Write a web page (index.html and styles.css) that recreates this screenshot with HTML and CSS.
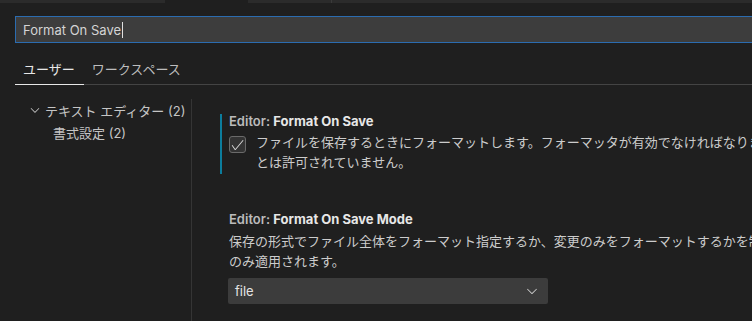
FILE: index.html
```html
<!DOCTYPE html>
<html lang="ja">
<head>
    <meta charset="UTF-8">
    <title>設定</title>
    <link rel="stylesheet" href="styles.css">
</head>
<body>

    <div class="tab-strip">
        <div class="strip-piece strip-a"></div>
        <div class="strip-gap"></div>
        <div class="strip-piece strip-b"></div>
        <div class="strip-piece strip-c"></div>
    </div>

    <div class="search-bar">
        <div class="search-box">Format On Save<span class="caret"></span></div>
    </div>

    <div class="scope-tabs">
        <div class="scope-tab active">ユーザー</div>
        <div class="scope-tab">ワークスペース</div>
    </div>

    <div class="settings-body">
        <div class="toc">
            <div class="toc-row">
                <svg class="toc-chevron" viewBox="0 0 16 16" width="14" height="14">
                    <path d="M7.976 10.072l4.357-4.357.62.618L8.284 11h-.618L3 6.333l.619-.618 4.357 4.357z" fill="#c5c5c5"/>
                </svg>
                <span>テキスト エディター (2)</span>
            </div>
            <div class="toc-row toc-child">書式設定 (2)</div>
        </div>

        <div class="settings-list">
            <!-- Format On Save -->
            <div class="setting modified">
                <div class="setting-title"><span class="category">Editor: </span>Format On Save</div>
                <div class="setting-check">
                    <div class="checkbox">
                        <svg viewBox="0 0 16 16" width="16" height="16">
                            <path d="M14.431 3.323l-8.47 10-.79-.036-3.35-4.77.818-.574 2.978 4.24 8.051-9.506.764.646z" fill="#d8d8d8"/>
                        </svg>
                    </div>
                    <div class="setting-desc">ファイルを保存するときにフォーマットします。フォーマッタが有効でなければなりません。ファイルの遅延保存やエディターを閉じるこ<br>とは許可されていません。</div>
                </div>
            </div>

            <!-- Format On Save Mode -->
            <div class="setting">
                <div class="setting-title"><span class="category">Editor: </span>Format On Save Mode</div>
                <div class="setting-desc">保存の形式でファイル全体をフォーマット指定するか、変更のみをフォーマットするかを制御します。ソース管理で利用できる場合に<br>のみ適用されます。</div>
                <div class="select-box">
                    <span>file</span>
                    <svg viewBox="0 0 16 16" width="16" height="16">
                        <path d="M7.976 10.072l4.357-4.357.62.618L8.284 11h-.618L3 6.333l.619-.618 4.357 4.357z" fill="#cccccc"/>
                    </svg>
                </div>
            </div>
        </div>
    </div>

</body>
</html>
```

FILE: styles.css
```css
/* General Styling */
* {
    margin: 0;
    padding: 0;
    box-sizing: border-box;
}

body {
    height: 100vh;
    overflow: hidden;
    display: flex;
    flex-direction: column;
    background: #1f1f1f;
    color: #cccccc;
    font-family: 'Inter', 'Noto Sans CJK JP', sans-serif;
    font-size: 13px;
}

/* Editor tab strip remains at the top */
.tab-strip {
    display: flex;
    height: 3px;
    flex-shrink: 0;
}

.strip-piece {
    background: #2b2b2b;
}

.strip-a {
    width: 165px;
}

.strip-gap {
    width: 83px;
}

.strip-b {
    width: 84px;
    border-right: 1px solid #3a3a3a;
}

.strip-c {
    flex: 1;
}

/* Search */
.search-bar {
    margin-top: 13px;
    padding-left: 15px;
}

.search-box {
    width: 760px;
    height: 27px;
    display: flex;
    align-items: center;
    padding-left: 7px;
    background: #3d3d3d;
    border: 1px solid #2b6cb0;
    color: #d4d4d4;
}

.caret {
    width: 1px;
    height: 16px;
    margin-left: 1px;
    background: #e0e0e0;
}

/* User / Workspace tabs */
.scope-tabs {
    display: flex;
    margin: 9px 0 0 15px;
    border-bottom: 1px solid #444444;
}

.scope-tab {
    height: 33px;
    display: flex;
    align-items: center;
    padding: 0 9px 0 8px;
    margin-bottom: -1px;
    color: #bdbdbd;
    border-bottom: 1px solid transparent;
}

.scope-tab.active {
    color: #e7e7e7;
    border-bottom-color: #e7e7e7;
}

/* Body */
.settings-body {
    flex: 1;
    min-height: 0;
    display: flex;
    margin-top: 14px;
}

.toc {
    width: 192px;
    border-right: 1px solid #353535;
}

.toc-row {
    height: 22px;
    display: flex;
    align-items: center;
    gap: 3px;
    padding-left: 28px;
    color: #c5c5c5;
}

.toc-row.toc-child {
    padding-left: 53px;
}

.settings-list {
    flex: 1;
    padding: 15px 0 0 28px;
    white-space: nowrap;
    overflow: hidden;
}

.setting {
    padding-left: 7px;
    border-left: 2px solid transparent;
    margin-bottom: 38px;
}

.setting.modified {
    border-left-color: #0c7d9d;
    padding-bottom: 2px;
}

.setting-title {
    line-height: 14px;
    color: #e7e7e7;
    font-weight: 700;
}

.setting-title .category {
    color: #bbbbbb;
    font-weight: 600;
}

.setting-check {
    display: flex;
    gap: 10px;
    margin-top: 5px;
}

.checkbox {
    width: 17px;
    height: 17px;
    margin-top: 3px;
    flex-shrink: 0;
    display: flex;
    align-items: center;
    justify-content: center;
    background: #333333;
    border: 1px solid #6a6a6a;
    border-radius: 3px;
}

.setting-desc {
    line-height: 19.5px;
    color: #cccccc;
}

.setting .setting-title + .setting-desc {
    margin-top: 6px;
}

.select-box {
    width: 320px;
    height: 26px;
    margin: 7px 0 0 -1px;
    display: flex;
    align-items: center;
    justify-content: space-between;
    padding: 0 8px 0 7px;
    background: #3c3c3c;
    border-radius: 2px;
    color: #e4e4e4;
}
```
